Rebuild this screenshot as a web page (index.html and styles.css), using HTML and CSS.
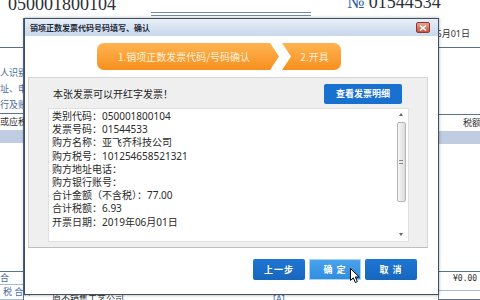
FILE: index.html
```html
<!DOCTYPE html>
<html lang="zh-CN">
<head>
  <meta charset="UTF-8">
  <title>销项正数发票代码号码填写、确认</title>
  <link rel="stylesheet" href="styles.css">
</head>
<body>
  <div class="page">
    <!-- invoice behind the dialog -->
    <div class="inv-top">
      <span class="inv-code">050001800104</span>
      <span class="inv-rule"></span>
      <span class="inv-no"><b>№</b> 01544534</span>
    </div>
    <div class="inv-grid">
      <div class="inv-col inv-left">
        <div class="row-head"></div>
        <div class="sp-17"></div>
        <div class="lbl">人识别号</div>
        <div class="lbl">址、电话</div>
        <div class="lbl">行及账号</div>
        <div class="rule dark"></div>
        <div class="row-th">或应税劳务</div>
        <div class="band"></div>
        <div class="fill"></div>
        <div class="rule dark"></div>
        <div class="lbl-sum">合</div>
        <div class="rule light"></div>
        <div class="lbl-sum2">税 合计</div>
        <div class="rule light"></div>
      </div>
      <div class="inv-mid">
        <div class="mid-foot">
          <span class="seller">原不销售工艺公司</span>
          <span class="mark">[A]</span>
        </div>
      </div>
      <div class="inv-col inv-right">
        <div class="row-date">2019年06月01日</div>
        <div class="fill-top"></div>
        <div class="rule dark"></div>
        <div class="row-th tax">税额</div>
        <div class="band"></div>
        <div class="fill"></div>
        <div class="rule dark"></div>
        <div class="row-money">¥0.00</div>
        <div class="rule light"></div>
        <div class="sp-8"></div>
        <div class="rule dark"></div>
      </div>
    </div>

    <!-- dialog -->
    <div class="dialog">
      <div class="dlg-title">
        <span>销项正数发票代码号码填写、确认</span>
        <span class="dlg-close">
          <svg width="8" height="6" viewBox="0 0 8 6"><path d="M1 0.5 L7 5.5 M7 0.5 L1 5.5" stroke="#fff" stroke-width="1.6"/></svg>
        </span>
      </div>
      <div class="dlg-body">
        <div class="steps">
          <div class="step step-1">1.销项正数发票代码/号码确认</div>
          <div class="step step-2">2.开具</div>
        </div>
        <div class="panel">
          <div class="panel-head">
            <span class="panel-msg">本张发票可以开红字发票！</span>
            <button class="btn btn-detail">查看发票明细</button>
          </div>
          <div class="info-box">
            <div class="info-text">
              <div>类别代码：050001800104</div>
              <div>发票号码：01544533</div>
              <div>购方名称：亚飞齐科技公司</div>
              <div>购方税号：101254658521321</div>
              <div>购方地址电话：</div>
              <div>购方银行账号：</div>
              <div>合计金额（不含税）：77.00</div>
              <div>合计税额：6.93</div>
              <div>开票日期：2019年06月01日</div>
            </div>
            <div class="scroll">
              <span class="arr up"></span>
              <span class="thumb"><i></i></span>
              <span class="arr down"></span>
            </div>
          </div>
        </div>
        <div class="dlg-actions">
          <button class="btn btn-act">上一步</button>
          <button class="btn btn-act btn-hover">确 定</button>
          <button class="btn btn-act">取 消</button>
        </div>
      </div>
    </div>

    <svg class="cursor" width="11" height="16" viewBox="0 0 11 16">
      <path d="M0.5 0.5 L0.5 12.5 L3.3 9.8 L5.3 14.5 L7.3 13.6 L5.4 9 L9.2 9 Z" fill="#fff" stroke="#000" stroke-width="1"/>
    </svg>
  </div>
</body>
</html>
```

FILE: styles.css
```css
* {
  box-sizing: border-box;
}

body {
  margin: 0;
  padding: 0;
  font-family: "Noto Sans", "Noto Sans CJK SC", sans-serif;
  background: #fff;
}

.page {
  position: relative;
  width: 480px;
  height: 300px;
  overflow: hidden;
  background: #fff;
}

/* invoice background */
.inv-top {
  display: flex;
  align-items: flex-start;
  height: 18px;
  font-family: "Liberation Serif", serif;
  color: #2b2f36;
}

.inv-code {
  margin: -5px 0 0 8px;
  font-size: 18px;
  line-height: 18px;
}

.inv-rule {
  width: 160px;
  height: 4px;
  margin: 12px 0 0 35px;
  border-top: 1px solid #6f8aae;
  border-bottom: 1px solid #6f8aae;
}

.inv-no {
  margin: -7px 0 0 36px;
  font-size: 18px;
  line-height: 18px;
  white-space: nowrap;
}

.inv-no b {
  font-weight: normal;
  color: #2c5aa0;
}

.inv-grid {
  display: grid;
  grid-template-columns: 24px 1fr 42px;
  height: 282px;
}

.inv-col {
  display: flex;
  flex-direction: column;
  font-size: 9px;
  color: #333;
  white-space: nowrap;
}

.inv-left {
  border-right: 1px solid #55708f;
}

.inv-right {
  border-left: 1px solid #55708f;
}

.row-head {
  height: 30px;
  border-bottom: 1px solid #55708f;
}

.sp-17 {
  height: 17px;
}

.lbl {
  height: 16px;
  line-height: 16px;
  color: #4a6b9e;
}

.rule {
  height: 1px;
  flex: none;
}

.rule.dark {
  background: #5a7392;
}

.rule.light {
  background: #a3bddb;
}

.row-th {
  height: 16px;
  line-height: 16px;
}

.row-th.tax {
  padding-left: 24px;
}

.band {
  height: 13px;
  background: #bfcce2;
}

.fill {
  flex: 1;
}

.lbl-sum {
  height: 12px;
  line-height: 12px;
  color: #4a6b9e;
}

.lbl-sum2 {
  height: 14px;
  line-height: 14px;
  padding-left: 3px;
  color: #4a6b9e;
}

.row-date {
  height: 30px;
  line-height: 30px;
  padding-top: 1px;
  text-align: right;
  padding-right: 10px;
  direction: rtl;
  border-bottom: 1px solid #55708f;
}

.fill-top {
  height: 66px;
}

.row-money {
  height: 18px;
  line-height: 13px;
  padding-left: 14px;
  font-family: "DejaVu Sans Mono", monospace;
  font-size: 8px;
}

.sp-8 {
  height: 8px;
}

.inv-mid {
  display: flex;
  flex-direction: column;
  justify-content: flex-end;
}

.mid-foot {
  display: flex;
  margin-bottom: -5px;
  font-size: 9px;
  line-height: 12px;
  color: #333;
}

.seller {
  margin-left: 28px;
}

.mark {
  margin-left: 149px;
  color: #4a6b9e;
}

/* dialog */
.dialog {
  position: absolute;
  left: 24px;
  top: 18px;
  width: 415px;
  height: 277px;
  display: flex;
  flex-direction: column;
  background: #fff;
  border: 1px solid #3e4f66;
  box-shadow: 0 0 3px rgba(0, 0, 0, 0.35);
}

.dlg-title {
  display: flex;
  align-items: center;
  height: 17px;
  padding-left: 5px;
  background: linear-gradient(#e8eff8, #c8d7ea);
  font-family: "Noto Sans CJK SC", sans-serif;
  font-size: 8px;
  font-weight: bold;
  color: #1e2a3a;
}

.dlg-close {
  display: flex;
  align-items: center;
  justify-content: center;
  width: 14px;
  height: 11px;
  margin: 0 8px 0 auto;
  border: 1px solid #8c3a2e;
  border-radius: 2px;
  background: linear-gradient(#eba193, #c9523e);
}

.dlg-body {
  flex: 1;
  display: flex;
  flex-direction: column;
}

.steps {
  display: flex;
  height: 27px;
  margin: 7px 0 0 72px;
}

.step {
  display: flex;
  align-items: center;
  justify-content: center;
  background: linear-gradient(#ffb451, #f78f1e);
  color: #fff1dc;
  font-family: "Noto Sans CJK SC", sans-serif;
  font-size: 10px;
  white-space: nowrap;
}

.step-1 {
  width: 182px;
  padding-right: 8px;
  border-radius: 7px 0 0 7px;
  clip-path: polygon(0 0, calc(100% - 9px) 0, 100% 50%, calc(100% - 9px) 100%, 0 100%);
}

.step-2 {
  width: 59px;
  margin-left: 3px;
  padding-left: 6px;
  border-radius: 0 7px 7px 0;
  clip-path: polygon(0 0, 100% 0, 100% 100%, 0 100%, 9px 50%);
}

.panel {
  display: flex;
  flex-direction: column;
  height: 171px;
  margin: 7px 10px 0 3px;
  background: #efefef;
  border: 1px solid #d6d6d6;
  border-bottom-color: #bdbdbd;
}

.panel-head {
  display: flex;
  align-items: center;
  justify-content: space-between;
  height: 30px;
  padding: 0 25px 0 24px;
}

.panel-msg {
  font-family: "Noto Sans", "Noto Sans CJK TC", sans-serif;
  font-size: 10px;
  color: #222;
}

.btn {
  border: none;
  border-radius: 2px;
  color: #fff;
  font-family: "Noto Sans CJK SC", sans-serif;
  font-weight: bold;
  cursor: pointer;
  padding: 0;
}

.btn-detail {
  width: 78px;
  height: 20px;
  margin-top: 1px;
  background: #1870cf;
  font-size: 9px;
}

.info-box {
  flex: 1;
  display: flex;
  margin: 0 18px 5px 19px;
  padding: 1px 2px 2px 3px;
  background: #fff;
  border: 1px solid #e0e0e0;
}

.info-text {
  flex: 1;
  font-family: "Noto Sans", "Noto Sans CJK TC", sans-serif;
  font-size: 10px;
  line-height: 13.2px;
  color: #2a2a2a;
}

.scroll {
  display: flex;
  flex-direction: column;
  align-items: center;
  width: 10px;
}

.arr {
  width: 0;
  height: 0;
  border-left: 2px solid transparent;
  border-right: 2px solid transparent;
}

.arr.up {
  margin-top: 3px;
  border-bottom: 3px solid #666;
}

.arr.down {
  margin: auto 0 3px;
  border-top: 3px solid #666;
}

.thumb {
  display: flex;
  align-items: center;
  justify-content: center;
  width: 9px;
  height: 80px;
  margin-top: 6px;
  border: 1px solid #b5b5b5;
  border-radius: 2px;
  background: linear-gradient(90deg, #f6f6f6, #dcdcdc);
}

.thumb i {
  width: 4px;
  height: 4px;
  border-top: 1px solid #888;
  border-bottom: 1px solid #888;
}

.dlg-actions {
  display: flex;
  justify-content: flex-end;
  gap: 4px;
  margin-top: 11px;
  padding-right: 21px;
}

.btn-act {
  width: 52px;
  height: 21px;
  font-size: 9px;
  letter-spacing: 1px;
  background: linear-gradient(#1f76d3, #1766bd);
}

.btn-hover {
  background: linear-gradient(#4aa2ec, #2f8ddf);
  box-shadow: inset 0 0 0 1px #a9d5f7;
}

.cursor {
  position: absolute;
  left: 350px;
  top: 268px;
}
```
